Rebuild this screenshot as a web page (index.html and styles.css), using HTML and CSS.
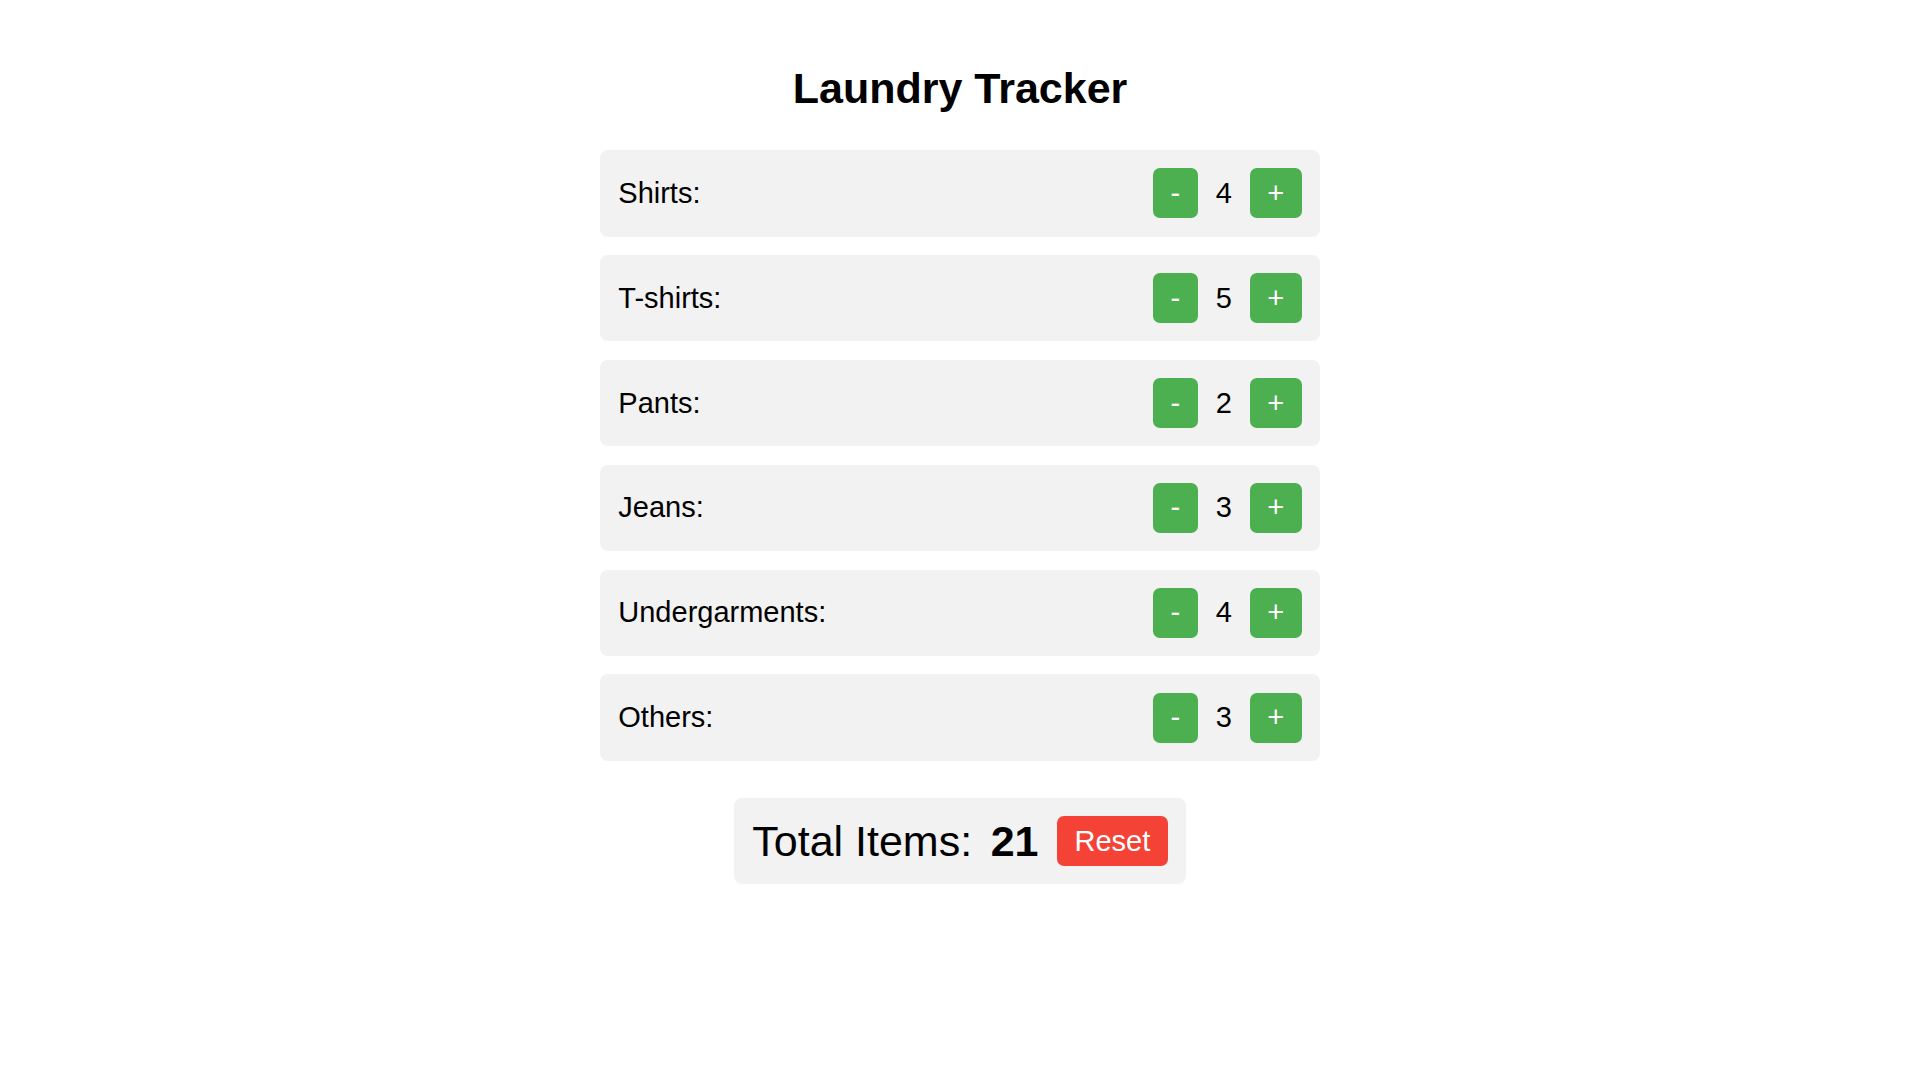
FILE: index.html
```html
<!DOCTYPE html>
<html lang="en">
<head>
<meta charset="utf-8">
<title>Laundry Tracker</title>
<link rel="stylesheet" href="styles.css">
</head>
<body>
<main class="app">
  <h1 class="title">Laundry Tracker</h1>
  <div class="list">
    <div class="row"><span class="label">Shirts:</span><div class="counter"><button class="btn">-</button><span class="count">4</span><button class="btn">+</button></div></div>
    <div class="row"><span class="label">T-shirts:</span><div class="counter"><button class="btn">-</button><span class="count">5</span><button class="btn">+</button></div></div>
    <div class="row"><span class="label">Pants:</span><div class="counter"><button class="btn">-</button><span class="count">2</span><button class="btn">+</button></div></div>
    <div class="row"><span class="label">Jeans:</span><div class="counter"><button class="btn">-</button><span class="count">3</span><button class="btn">+</button></div></div>
    <div class="row"><span class="label">Undergarments:</span><div class="counter"><button class="btn">-</button><span class="count">4</span><button class="btn">+</button></div></div>
    <div class="row"><span class="label">Others:</span><div class="counter"><button class="btn">-</button><span class="count">3</span><button class="btn">+</button></div></div>
  </div>
  <div class="total">
    <span class="total-label">Total Items:</span>
    <span class="total-value">21</span>
    <button class="btn btn-reset">Reset</button>
  </div>
</main>
</body>
</html>
```
FILE: styles.css
```css
html, body {
  margin: 0;
  padding: 0;
  background: #ffffff;
}
body {
  font-family: "Liberation Sans", Arial, sans-serif;
  color: #000;
}
.app {
  width: 720px;
  margin: 0 auto;
  display: flex;
  flex-direction: column;
  align-items: center;
  padding-top: 64px;
}
.title {
  font-size: 43px;
  font-weight: bold;
  margin: 0 0 37px 0;
  line-height: 49px;
}
.list {
  width: 100%;
  display: flex;
  flex-direction: column;
  gap: 18.3px;
}
.row {
  background: #f2f2f2;
  border-radius: 8px;
  padding: 18.3px;
  display: flex;
  align-items: center;
  justify-content: space-between;
}
.label {
  font-size: 29px;
  line-height: 33px;
}
.counter {
  display: flex;
  align-items: center;
}
.count {
  font-size: 29px;
  line-height: 33px;
  margin: 0 18px;
}
.btn {
  font-family: "Liberation Sans", Arial, sans-serif;
  font-size: 29px;
  line-height: 33px;
  padding: 8.5px 17.5px;
  border: none;
  border-radius: 7px;
  background: #4caf50;
  color: #fff;
  cursor: pointer;
}
.total {
  margin-top: 36.7px;
  background: #f2f2f2;
  border-radius: 8px;
  padding: 18.3px;
  display: flex;
  align-items: center;
  gap: 18.5px;
}
.total-label {
  font-size: 43px;
}
.total-value {
  font-size: 43px;
  font-weight: bold;
}
.btn-reset {
  background: #f44336;
}
```
